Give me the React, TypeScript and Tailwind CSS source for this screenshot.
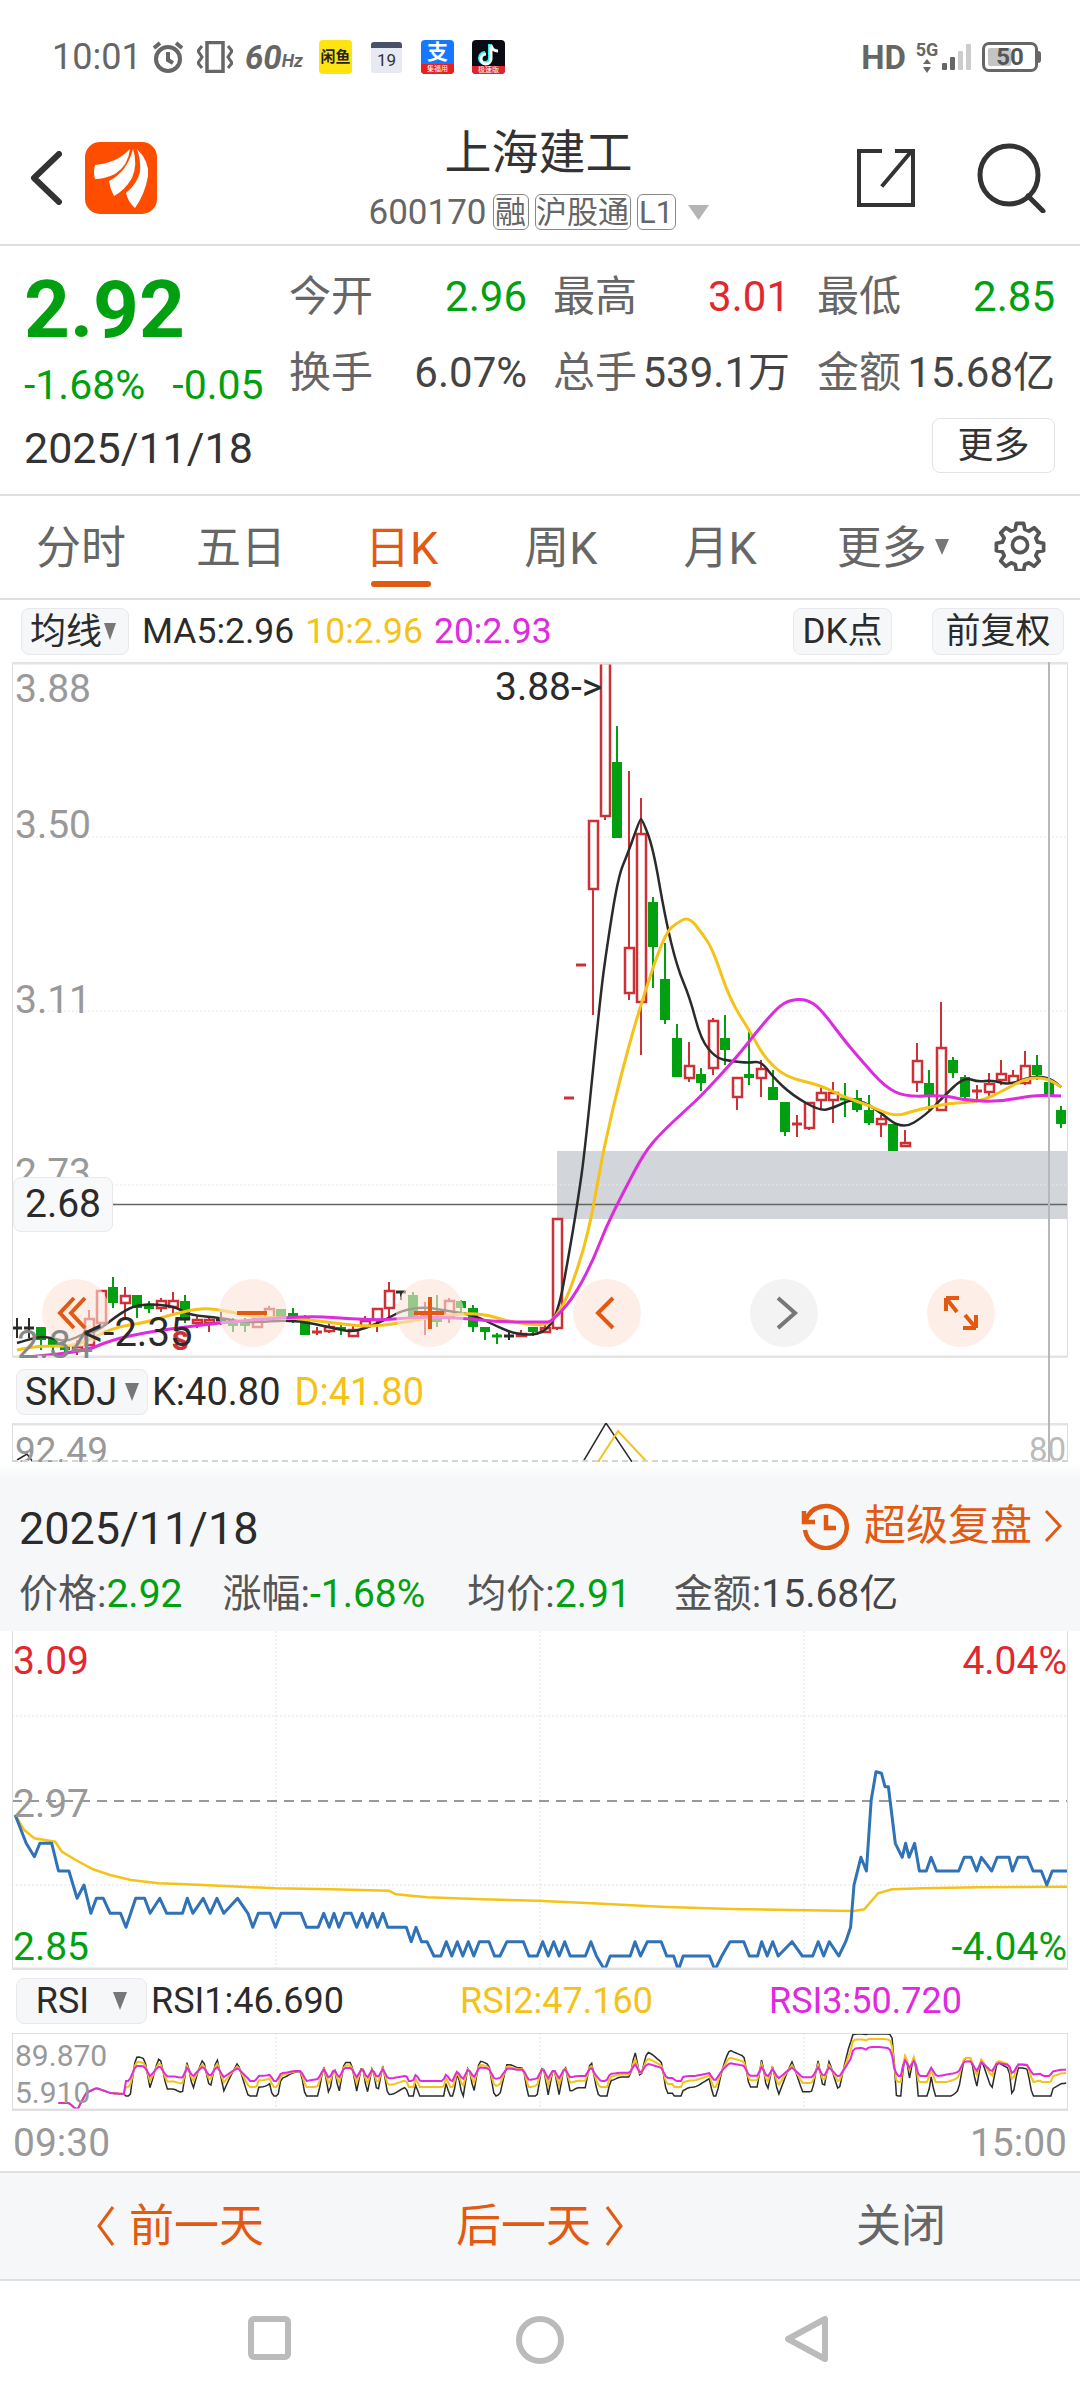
import React from "react";

const RED = "#cf3036";
const GREEN = "#00a010";
const YELLOW = "#f5c218";
const PINK = "#dd2bdd";
const INK = "#2b2b2b";
const ORANGE = "#e25a12";

// x, colour, wick top, body top, body bottom, wick bottom
type Candle = [number, string, number, number, number, number];
const candles: Candle[] = [
  [17, "k", 1318, 1327, 1328, 1338], [29, "k", 1318, 1327, 1328, 1338], [41, "g", 1327, 1327, 1340, 1350], [53, "g", 1336, 1338, 1347, 1354],
  [65, "g", 1340, 1345, 1350, 1354], [77, "r", 1340, 1346, 1350, 1355], [89, "r", 1310, 1318, 1345, 1346], [101, "r", 1290, 1290, 1323, 1325],
  [113, "g", 1277, 1287, 1303, 1308], [125, "r", 1287, 1295, 1303, 1317], [137, "g", 1295, 1295, 1308, 1318], [149, "g", 1301, 1305, 1309, 1313],
  [161, "r", 1298, 1300, 1308, 1312], [173, "r", 1292, 1300, 1307, 1315], [185, "g", 1295, 1301, 1320, 1323], [197, "r", 1316, 1319, 1323, 1328],
  [209, "r", 1316, 1319, 1323, 1332], [221, "k", 1309, 1319, 1320, 1325], [233, "g", 1318, 1320, 1326, 1332], [245, "g", 1318, 1320, 1326, 1332],
  [257, "r", 1316, 1318, 1327, 1327], [269, "r", 1306, 1308, 1318, 1320], [281, "g", 1309, 1309, 1317, 1318], [293, "g", 1308, 1313, 1317, 1323],
  [305, "g", 1315, 1318, 1335, 1335], [317, "r", 1327, 1331, 1332, 1335], [329, "r", 1322, 1326, 1331, 1333], [341, "g", 1323, 1327, 1330, 1335],
  [353, "r", 1325, 1329, 1336, 1336], [365, "r", 1316, 1320, 1326, 1328], [377, "r", 1308, 1308, 1320, 1332], [389, "r", 1282, 1290, 1308, 1320],
  [401, "k", 1291, 1291, 1292, 1300], [413, "g", 1292, 1295, 1317, 1318], [425, "r", 1302, 1314, 1316, 1335], [437, "g", 1295, 1318, 1322, 1327],
  [449, "r", 1298, 1300, 1317, 1323], [461, "g", 1300, 1301, 1308, 1312], [473, "g", 1305, 1308, 1327, 1332], [485, "g", 1327, 1327, 1332, 1340],
  [497, "g", 1333, 1335, 1336, 1344], [509, "k", 1331, 1335, 1336, 1340], [521, "r", 1330, 1333, 1336, 1337], [533, "g", 1327, 1327, 1332, 1336],
  [545, "r", 1322, 1327, 1332, 1333], [557, "r", 1218, 1218, 1328, 1330], [569, "r", 1097, 1097, 1098, 1098], [581, "r", 964, 964, 965, 965],
  [593, "r", 820, 820, 889, 1015], [605, "r", 662, 662, 816, 820], [617, "g", 726, 762, 838, 838], [629, "r", 771, 947, 993, 1000],
  [641, "r", 798, 833, 1002, 1055], [653, "g", 897, 902, 947, 988], [665, "g", 943, 979, 1020, 1024], [677, "g", 1024, 1038, 1077, 1077],
  [689, "r", 1042, 1065, 1078, 1082], [701, "g", 1068, 1074, 1083, 1091], [713, "r", 1018, 1020, 1068, 1075], [725, "g", 1015, 1038, 1050, 1065],
  [737, "r", 1077, 1077, 1097, 1110], [749, "g", 1030, 1074, 1078, 1085], [761, "r", 1060, 1068, 1078, 1097], [773, "g", 1070, 1087, 1100, 1100],
  [785, "g", 1102, 1102, 1132, 1136], [797, "r", 1115, 1123, 1124, 1137], [809, "r", 1102, 1102, 1128, 1130], [821, "r", 1085, 1092, 1100, 1110],
  [833, "r", 1082, 1092, 1100, 1123], [845, "g", 1083, 1098, 1100, 1117], [857, "g", 1090, 1098, 1110, 1112], [869, "g", 1095, 1110, 1123, 1125],
  [881, "r", 1115, 1118, 1124, 1137], [893, "g", 1124, 1124, 1151, 1151], [905, "r", 1130, 1142, 1146, 1146], [917, "r", 1043, 1060, 1082, 1092],
  [929, "g", 1070, 1083, 1097, 1110], [941, "r", 1002, 1047, 1110, 1110], [953, "g", 1057, 1060, 1073, 1078], [965, "g", 1075, 1077, 1097, 1098],
  [977, "r", 1085, 1090, 1092, 1100], [989, "r", 1073, 1083, 1092, 1097], [1001, "r", 1060, 1073, 1080, 1085], [1013, "r", 1070, 1075, 1083, 1085],
  [1025, "r", 1051, 1065, 1083, 1085], [1037, "g", 1055, 1065, 1075, 1080], [1049, "g", 1056, 1082, 1097, 1127], [1061, "g", 1106, 1110, 1124, 1128],
];

const ma5 = "17,1343 37,1337 48,1337 67,1342 85,1333 96,1332 122,1312 137,1305 159,1304 178,1308 189,1315 222,1318 240,1322 259,1322 296,1320 333,1328 351,1332 366,1328 385,1320 403,1310 425,1307 448,1311 474,1315 498,1327 518,1335 544,1334 558,1313 568,1260 578,1200 585,1150 600,1000 606,953 618,877 628,853 640,819 642,819 653,847 665,917 677,967 690,998 701,1040 716,1058 730,1061 749,1063 761,1061 773,1077 792,1095 820,1111 833,1108 854,1098 875,1108 902,1130 926,1115 943,1097 964,1077 978,1082 992,1080 1009,1085 1033,1076 1050,1078 1061,1087";
const ma10 = "17,1350 30,1347 48,1346 78,1346 111,1328 148,1322 170,1315 200,1308 222,1310 259,1318 296,1318 333,1323 370,1327 407,1322 444,1315 481,1313 510,1322 544,1326 555,1318 568,1297 589,1233 603,1150 623,1067 642,1000 665,933 678,922 689,917 702,933 713,950 730,1000 751,1033 764,1057 785,1077 820,1085 844,1097 868,1105 895,1117 916,1110 950,1103 978,1102 999,1093 1026,1078 1047,1078 1061,1087";
const ma20 = "17,1358 81,1353 111,1340 148,1332 185,1327 229,1322 266,1319 314,1316 351,1319 388,1320 414,1317 462,1318 499,1322 544,1322 551,1322 572,1300 592,1263 606,1227 623,1193 644,1153 661,1133 689,1107 702,1095 737,1057 758,1030 778,1007 790,1000 806,999 820,1008 844,1040 861,1060 885,1087 906,1097 943,1095 964,1100 999,1102 1033,1095 1061,1096";

// midpoint quadratic smoothing, the app draws its averages as curves
const smooth = (pts: string) => {
  const p = pts.split(" ").map((s) => s.split(",").map(Number));
  let d = `M${p[0][0]} ${p[0][1]}`;
  for (let i = 1; i < p.length - 1; i++) {
    const mx = (p[i][0] + p[i + 1][0]) / 2;
    const my = (p[i][1] + p[i + 1][1]) / 2;
    d += `Q${p[i][0]} ${p[i][1]} ${mx} ${my}`;
  }
  const last = p[p.length - 1];
  return `${d}L${last[0]} ${last[1]}`;
};

// intraday price, traced as x,y pairs off the 1568-wide crop
const pricePts = [22,945,38,1030,50,1070,58,1030,75,1030,85,1113,100,1113,112,1195,122,1155,132,1240,140,1195,150,1195,160,1240,175,1240,183,1282,197,1195,210,1195,218,1240,232,1195,242,1240,265,1240,272,1195,280,1240,295,1195,305,1240,315,1195,325,1240,345,1195,360,1240,367,1282,375,1240,392,1240,400,1282,408,1240,437,1240,445,1282,462,1282,470,1240,478,1282,485,1240,492,1282,500,1240,510,1240,518,1282,526,1240,533,1282,541,1240,548,1282,556,1240,563,1282,572,1282,590,1282,597,1325,604,1282,612,1325,620,1325,630,1368,640,1368,648,1325,656,1368,664,1325,672,1368,680,1325,688,1368,696,1325,710,1325,718,1368,726,1368,736,1325,760,1325,768,1368,780,1368,788,1325,796,1368,804,1325,812,1368,820,1325,828,1368,850,1368,858,1325,866,1368,878,1410,886,1368,915,1368,922,1325,930,1368,940,1325,960,1325,968,1368,978,1368,985,1410,992,1368,1030,1368,1038,1410,1048,1368,1060,1325,1080,1325,1088,1368,1100,1368,1106,1325,1114,1368,1122,1325,1130,1368,1150,1325,1165,1368,1180,1368,1188,1325,1196,1368,1204,1325,1218,1368,1228,1325,1235,1282,1240,1155,1250,1072,1258,1113,1265,900,1272,815,1280,820,1285,860,1290,860,1300,1030,1310,1072,1315,1030,1320,1072,1328,1030,1335,1113,1345,1113,1352,1072,1360,1113,1392,1113,1400,1072,1410,1072,1418,1113,1425,1072,1440,1113,1448,1072,1465,1072,1470,1113,1478,1072,1492,1072,1500,1113,1512,1113,1520,1155,1528,1113,1550,1113];
const avgPts = [22,945,35,990,50,1015,80,1025,90,1055,110,1080,135,1108,160,1125,190,1140,230,1150,270,1153,350,1160,400,1165,480,1168,565,1172,575,1183,620,1192,700,1198,780,1202,860,1210,960,1220,1060,1227,1170,1231,1240,1233,1255,1228,1275,1180,1295,1168,1340,1165,1420,1162,1550,1160];

const toIntraday = (pts: number[]) => {
  const out: string[] = [];
  for (let i = 0; i < pts.length; i += 2) out.push(`${(pts[i] / 1.452).toFixed(1)},${(1500 + pts[i + 1] / 3).toFixed(1)}`);
  return out.join(" ");
};

const lerp = (pts: number[], x: number) => {
  for (let j = 0; j < pts.length - 2; j += 2) {
    if (x <= pts[j + 2]) return pts[j + 1] + ((pts[j + 3] - pts[j + 1]) * (x - pts[j])) / (pts[j + 2] - pts[j]);
  }
  return pts[pts.length - 1];
};

// the opening stretch of the RSI pane, taken straight off the crop
const rsiStart = [85, 2103, 100, 2103, 112, 2110, 125, 2093, 140, 2088, 160, 2093, 180, 2094];

const rsiLine = (k: number, base: number, up: number, down: number, lift: number) => {
  const xs: number[] = [];
  for (let x = 85; x <= 1550; x += 3.16) xs.push(x);
  const price = (x: number) => lerp(pricePts, x) / 3;
  return xs
    .map((x) => {
      if (x < 180) return `${(x / 1.452).toFixed(1)},${lerp(rsiStart, x).toFixed(1)}`;
      let sum = 0;
      for (let i = 0; i < 24; i++) {
        const at = x - i * 3.16;
        // after the afternoon spike the average restarts, or it drags the lines down
        sum += price(x > 1310 ? Math.max(at, 1310) : at);
      }
      const move = (sum / 24 - price(x)) * k;
      const y = (x > 1300 ? base - lift : base) - (move > 0 ? up * Math.tanh(move / up) : Math.max(move, -down));
      return `${(x / 1.452).toFixed(1)},${y.toFixed(1)}`;
    })
    .join(" ");
};

function Caret({ className = "w-[14px] h-[20px]", color = "#777" }: { className?: string; color?: string }) {
  return (
    <svg viewBox="0 0 14 20" className={className} preserveAspectRatio="none">
      <polygon points="0,0 14,0 7,20" fill={color} />
    </svg>
  );
}

function ChartButton({ children, className }: { children: React.ReactNode; className: string }) {
  return (
    <div className={`flex items-center rounded-lg border border-[#e7e9ec] bg-[#f6f7f9] leading-none text-[#2b2b2b] ${className}`}>
      {children}
    </div>
  );
}

function Tag({ children, width }: { children: React.ReactNode; width: string }) {
  return (
    <span className={`flex h-[36px] items-center justify-center rounded-md border border-[#888] text-[31px] leading-none text-[#666] ${width}`}>
      {children}
    </span>
  );
}

function StatusBar() {
  return (
    <div className="flex h-[110px] items-start justify-between pl-[52px] pr-[39px] pt-[39px]">
      <div className="flex h-[36px] items-center">
        <span className="w-[99px] text-[36px] leading-none text-[#666]">10:01</span>
        <svg viewBox="0 0 34 34" className="h-[34px] w-[34px]" fill="none" stroke="#666" strokeWidth="4">
          <circle cx="17" cy="19" r="12" />
          <path d="M17 12v8l5 3M3 8l6-5M31 8l-6-5" />
        </svg>
        <svg viewBox="0 0 36 32" className="ml-[12px] h-[32px] w-[36px]" fill="none" stroke="#666" strokeWidth="3">
          <rect x="10" y="1.500" width="16" height="29" strokeWidth="3.500" />
          <path d="M5 5 1 10l4 6-4 6 4 5M31 5l4 5-4 6 4 6-4 5" />
        </svg>
        <span className="ml-[12px] text-[33px] font-bold italic leading-none text-[#666]">60</span>
        <span className="mt-[8px] text-[18px] font-bold italic leading-none text-[#666]">Hz</span>
        <div className="ml-[16px] flex h-[34px] w-[33px] items-center justify-center rounded-[4px] bg-[#ffe412] text-[15px] font-bold leading-none text-[#222]">闲鱼</div>
        <div className="ml-[19px] flex h-[31px] w-[31px] flex-col overflow-hidden rounded-[3px] bg-[#e8eaf3]">
          <div className="h-[6px] bg-[#4a5068]" />
          <div className="flex flex-1 items-center justify-center text-[17px] leading-none text-[#333]">19</div>
        </div>
        <div className="ml-[19px] flex h-[34px] w-[33px] flex-col overflow-hidden rounded-[4px] bg-[#1677ff]">
          <div className="flex h-[24px] items-center justify-center text-[21px] font-bold leading-none text-white">支</div>
          <div className="flex flex-1 items-center justify-center bg-[#e8201c] text-[7px] leading-none text-white">集福用</div>
        </div>
        <div className="ml-[18px] flex h-[34px] w-[33px] flex-col overflow-hidden rounded-[4px] bg-[#0b0b14]">
          <svg viewBox="0 0 33 26" className="h-[26px] w-[33px]" fill="none" strokeWidth="4">
            <path d="M18 4v14a5 5 0 1 1-5-5" stroke="#25f4ee" />
            <path d="M19 5v14a5 5 0 1 1-5-5M19 5c1 4 3 6 7 6" stroke="#fff" strokeWidth="3" />
          </svg>
          <div className="flex flex-1 items-center justify-center bg-[#e0232f] text-[7px] leading-none text-white">极速版</div>
        </div>
      </div>
      <div className="flex h-[36px] items-center">
        <span className="text-[33px] font-bold leading-none text-[#666]">HD</span>
        <div className="ml-[9px] flex w-[24px] flex-col items-center">
          <span className="text-[18px] font-bold leading-none text-[#666]">5G</span>
          <svg viewBox="0 0 10 14" className="h-[14px] w-[10px]" fill="#666">
            <polygon points="5,0 9,5 1,5" />
            <polygon points="5,14 9,8 1,8" />
          </svg>
        </div>
        <div className="ml-[3px] flex h-[26px] items-end gap-[3px]">
          <div className="h-[7px] w-[5px] rounded-[1px] bg-[#666]" />
          <div className="h-[13px] w-[5px] rounded-[1px] bg-[#666]" />
          <div className="h-[19px] w-[5px] rounded-[1px] bg-[#ccc]" />
          <div className="h-[26px] w-[5px] rounded-[1px] bg-[#ccc]" />
        </div>
        <div className="relative ml-[11px] flex h-[30px] w-[56px] items-center rounded-[7px] border-[3px] border-[#666] p-[3px]">
          <div className="h-full w-[23px] rounded-[2px] bg-[#c4c4c4]" />
          <span className="absolute inset-0 flex items-center justify-center text-[24px] font-bold leading-none text-[#555]">50</span>
        </div>
        <div className="h-[12px] w-[3px] rounded-r-sm bg-[#666]" />
      </div>
    </div>
  );
}

function Header() {
  return (
    <div className="flex h-[136px] items-start justify-between border-b-2 border-[#dfdfdf] pl-[30px] pr-[33px]">
      <div className="flex w-[300px] items-center pt-[32px]">
        <svg viewBox="0 0 32 54" className="h-[54px] w-[32px]" fill="none" stroke="#333" strokeWidth="6" strokeLinecap="round" strokeLinejoin="round">
          <path d="M29 3 4 27l25 24" />
        </svg>
        <div className="ml-[23px] h-[72px] w-[72px] rounded-[15px] bg-[#ff4d00]">
          <svg viewBox="0 0 72 72" className="h-[72px] w-[72px]" fill="#fff">
            <path d="M10 23Q32 21 45 7 43 24 30 32 20 37 10 37 8 30 10 23Z" />
            <path d="M24 39Q42 30 48 7 53 22 47 36 40 48 29 54 25 47 24 39Z" />
            <path d="M52 7Q65 20 63 34 60 52 50 66 43 60 41 51 52 42 55 30 56 18 52 7Z" />
          </svg>
        </div>
      </div>
      <div className="flex flex-col items-center pt-[16px]">
        <div className="text-[47px] leading-[54px] text-[#333]">上海建工</div>
        <div className="mt-[14px] flex h-[36px] items-center gap-[6px]">
          <span className="text-[35px] leading-none text-[#666]">600170</span>
          <Tag width="w-[36px]">融</Tag>
          <Tag width="w-[96px]">沪股通</Tag>
          <Tag width="w-[39px]">L1</Tag>
          <Caret className="ml-[6px] h-[15px] w-[21px]" color="#b5b5b5" />
        </div>
      </div>
      <div className="flex w-[300px] items-center justify-end pt-[33px]">
        <svg viewBox="0 0 58 58" className="h-[58px] w-[58px]" fill="none" stroke="#333" strokeWidth="4">
          <path d="M23 2H2v54h54V2M56 3v24M26 36 53 4M56 2H40" strokeLinecap="square" />
        </svg>
        <svg viewBox="0 0 70 70" className="ml-[62px] h-[70px] w-[70px]" fill="none" stroke="#333" strokeWidth="5">
          <circle cx="32" cy="32" r="29" />
          <path d="m51 53 15 15" strokeLinecap="round" />
        </svg>
      </div>
    </div>
  );
}

function Stat({ label, value, color, width }: { label: string; value: string; color: string; width: string }) {
  return (
    <div className={`flex items-center justify-between ${width}`}>
      <span className="text-[42px] leading-none text-[#666]">{label}</span>
      <span className={`text-[42px] leading-none ${color}`}>{value}</span>
    </div>
  );
}

function Quote() {
  return (
    <div className="flex h-[250px] border-b-2 border-[#dfdfdf] pl-[24px]">
      <div className="w-[265px] pt-[20px]">
        <div className="text-[80px] font-bold leading-[88px] text-[#00a010]">2.92</div>
        <div className="mt-[11px] flex gap-[27px] text-[41px] leading-none text-[#00a010]">
          <span>-1.68%</span>
          <span>-0.05</span>
        </div>
        <div className="mt-[21px] text-[43px] leading-none text-[#333]">2025/11/18</div>
      </div>
      <div className="pt-[30px]">
        <div className="flex">
          <Stat label="今开" value="2.96" color="text-[#00a010]" width="w-[238px]" />
          <Stat label="最高" value="3.01" color="text-[#e0282e]" width="ml-[26px] w-[237px]" />
          <Stat label="最低" value="2.85" color="text-[#00a010]" width="ml-[27px] w-[238px]" />
        </div>
        <div className="mt-[34px] flex">
          <Stat label="换手" value="6.07%" color="text-[#444]" width="w-[238px]" />
          <Stat label="总手" value="539.1万" color="text-[#444]" width="ml-[26px] w-[237px]" />
          <Stat label="金额" value="15.68亿" color="text-[#444]" width="ml-[27px] w-[238px]" />
        </div>
        <div className="mt-[24px] flex justify-end">
          <div className="flex h-[55px] w-[123px] items-center justify-center rounded-lg border border-[#e3e3e3] text-[36px] leading-none text-[#333]">更多</div>
        </div>
      </div>
    </div>
  );
}

function Tabs() {
  const base = "text-[45px] leading-none text-[#666]";
  return (
    <div className="relative flex h-[104px] items-start border-b-2 border-[#dfdfdf] pt-[30px]">
      <span className={`ml-[36px] ${base}`}>分时</span>
      <span className={`ml-[70px] ${base}`}>五日</span>
      <span className="ml-[79px] text-[45px] leading-none text-[#e25a12]">日K</span>
      <span className={`ml-[86px] ${base}`}>周K</span>
      <span className={`ml-[86px] ${base}`}>月K</span>
      <span className={`ml-[80px] ${base}`}>更多</span>
      <Caret className="ml-[8px] mt-[13px] h-[16px] w-[14px]" />
      <svg viewBox="0 0 24 24" className="ml-[45px] -mt-[7px] h-[52px] w-[52px]" fill="none" stroke="#555" strokeWidth="1.700" strokeLinejoin="round">
        <path d="M10.300 2h3.400l.5 2.800 1.900.8 2.400-1.600 2.400 2.400-1.600 2.400.8 1.900 2.800.5v3.400l-2.800.5-.8 1.900 1.600 2.400-2.400 2.400-2.400-1.600-1.900.8-.5 2.800h-3.400l-.5-2.800-1.900-.8-2.400 1.600-2.400-2.400 1.600-2.400-.8-1.900-2.800-.5v-3.400l2.800-.5.8-1.900-1.600-2.400 2.400-2.400 2.400 1.600 1.900-.8z" />
        <circle cx="12" cy="12" r="3.500" />
      </svg>
      <div className="absolute left-[371px] top-[85px] h-[6px] w-[60px] rounded-full bg-[#e25a12]" />
    </div>
  );
}

function CircleButton({ cx, gray, children }: { cx: number; gray?: boolean; children?: React.ReactNode }) {
  return (
    <div
      className={`absolute top-[617px] h-[68px] w-[68px] rounded-full ${gray ? "bg-[#eeeeee]/70" : "bg-[#fbe4d8]/60"}`}
      style={{ left: cx - 46 }}
    >
      <svg viewBox="0 0 68 68" className="h-[68px] w-[68px]" fill="none" stroke={gray ? "#777" : ORANGE} strokeWidth="4">
        {children}
      </svg>
    </div>
  );
}

function KChart() {
  return (
    <div className="relative mx-[12px] h-[696px] w-[1056px]">
      <svg viewBox="12 662 1056 696" className="absolute inset-0 h-[696px] w-[1056px]" fill="none">
        <rect x="557" y="1151" width="511" height="68" fill="#d2d5da" />
        {[837, 1011, 1185].map((y) => (
          <line key={y} x1="12" x2="1068" y1={y} y2={y} stroke="#e8e8e8" strokeDasharray="2 2" />
        ))}
        <line x1="13" x2="1068" y1="1204.500" y2="1204.500" stroke="#666" strokeWidth="1.500" />
        {candles.map(([x, c, wt, bt, bb, wb]) => {
          const col = c === "r" ? RED : c === "g" ? GREEN : INK;
          return (
            <g key={x}>
              <line x1={x} x2={x} y1={wt} y2={bt} stroke={col} strokeWidth="2" />
              <line x1={x} x2={x} y1={bb} y2={wb} stroke={col} strokeWidth="2" />
              {bb - bt <= 2 ? (
                <line x1={x - 5} x2={x + 5} y1={bt + 1} y2={bt + 1} stroke={col} strokeWidth="3" />
              ) : c === "r" ? (
                <rect x={x - 4} y={bt + 1} width="9" height={bb - bt - 1} fill="#fff" stroke={col} strokeWidth="2.500" />
              ) : (
                <rect x={x - 5} y={bt} width="10" height={bb - bt} fill={col} />
              )}
            </g>
          );
        })}
        <path d={smooth(ma5)} stroke={INK} strokeWidth="2.500" />
        <path d={smooth(ma10)} stroke={YELLOW} strokeWidth="3" />
        <path d={smooth(ma20)} stroke={PINK} strokeWidth="3" />
        <path d="M12 662V1358M1068 662V1358" stroke="#dedede" strokeWidth="2" />
        <path d="M12 663H1068M12 1357H1068" stroke="#e4e4e4" strokeWidth="3" />
      </svg>
      <span className="absolute left-[3px] top-[8px] text-[39px] leading-none text-[#999]">3.88</span>
      <span className="absolute left-[3px] top-[144px] text-[39px] leading-none text-[#999]">3.50</span>
      <span className="absolute left-[3px] top-[319px] text-[39px] leading-none text-[#999]">3.11</span>
      <span className="absolute left-[3px] top-[492px] text-[39px] leading-none text-[#999]">2.73</span>
      <span className="absolute left-[483px] top-[6px] text-[39px] leading-none text-[#2b2b2b]">3.88-&gt;</span>
      <div className="absolute left-[1px] top-[515px] flex h-[55px] w-[100px] items-center justify-center rounded-lg border border-[#e7e9ec] bg-[#f8f9fa] text-[39px] leading-none text-[#2b2b2b]">2.68</div>
      <CircleButton cx={76}>
        <path d="M32 19 18 34l14 15M43 19 29 34l14 15" />
      </CircleButton>
      <CircleButton cx={253}>
        <path d="M18 34h30" />
      </CircleButton>
      <CircleButton cx={430}>
        <path d="M18 34h30M34 18v32" />
      </CircleButton>
      <CircleButton cx={607}>
        <path d="M40 19 25 34l15 15" />
      </CircleButton>
      <CircleButton cx={784} gray>
        <path d="m28 19 17 15-17 15" />
      </CircleButton>
      <CircleButton cx={961}>
        <path d="M19 19h13M19 19v13M19 19l11 14M49 49H36M49 49V36M49 49 38 36" />
      </CircleButton>
      <span className="absolute left-[160px] top-[666px] text-[26px] font-black leading-none text-[#cf3036]">S</span>
      <span className="absolute left-[5px] top-[664px] text-[39px] leading-none text-[#888]">2.34</span>
      <span className="absolute left-[71px] top-[651px] text-[40px] leading-none text-[#2b2b2b]">&lt;-2.35</span>
    </div>
  );
}

function SkdjChart() {
  return (
    <div className="relative mx-[12px] h-[39px] w-[1056px] overflow-hidden">
      <svg viewBox="12 1423 1056 39" className="absolute inset-0 h-[39px] w-[1056px]" fill="none">
        <path d="M12 1424H1068" stroke="#e4e4e4" strokeWidth="3" />
        <path d="M12 1423V1462M1068 1423V1462" stroke="#dedede" strokeWidth="2" />
        <path d="M17 1460l10-6 6 8" stroke={INK} strokeWidth="1.500" />
        <path d="M583 1462 606 1423 632 1462" stroke={INK} strokeWidth="1.500" />
        <path d="M598 1462 618 1431 647 1462" stroke={YELLOW} strokeWidth="2" />
      </svg>
      <span className="absolute left-[3px] top-[9px] text-[37px] leading-none text-[#999]">92.49</span>
      <span className="absolute right-[2px] top-[10px] text-[33px] leading-none text-[#bbb]">80</span>
      <div className="absolute inset-x-0 bottom-0 border-b-2 border-dashed border-[#d4d4d4]" />
    </div>
  );
}

function Intraday() {
  return (
    <div className="relative mx-[12px] h-[339px] w-[1056px]">
      <svg viewBox="12 1631 1056 339" className="absolute inset-0 h-[339px] w-[1056px]" fill="none">
        {[1716, 1885].map((y) => (
          <line key={y} x1="12" x2="1068" y1={y} y2={y} stroke="#e2e2e2" strokeDasharray="2 2" />
        ))}
        {[276, 540, 804].map((x) => (
          <line key={x} x1={x} x2={x} y1="1631" y2="1970" stroke="#e2e2e2" strokeDasharray="2 2" />
        ))}
        <line x1="12" x2="1068" y1="1801" y2="1801" stroke="#999" strokeWidth="2" strokeDasharray="10 7" />
        <polyline points={toIntraday(avgPts)} stroke={YELLOW} strokeWidth="2.500" />
        <polyline points={toIntraday(pricePts)} stroke="#2f72b8" strokeWidth="3" strokeLinejoin="round" />
        <path d="M12 1631V1970M1068 1631V1970" stroke="#dedede" strokeWidth="2" />
        <path d="M12 1969H1068" stroke="#e0e0e0" strokeWidth="3" />
      </svg>
      <span className="absolute left-[1px] top-[11px] text-[39px] leading-none text-[#e0282e]">3.09</span>
      <span className="absolute right-[1px] top-[11px] text-[39px] leading-none text-[#e0282e]">4.04%</span>
      <span className="absolute left-[1px] top-[154px] text-[39px] leading-none text-[#999]">2.97</span>
      <span className="absolute left-[1px] top-[297px] text-[39px] leading-none text-[#00a010]">2.85</span>
      <span className="absolute right-[1px] top-[297px] text-[39px] leading-none text-[#00a010]">-4.04%</span>
    </div>
  );
}

function RsiChart() {
  return (
    <div className="relative mx-[12px] h-[78px] w-[1056px]">
      <svg viewBox="12 2033 1056 78" className="absolute inset-0 h-[78px] w-[1056px]" fill="none">
        {[276, 540, 804].map((x) => (
          <line key={x} x1={x} x2={x} y1="2033" y2="2110" stroke="#e2e2e2" strokeDasharray="2 2" />
        ))}
        <polyline points={rsiLine(2.2, 2078, 44, 18, 0)} stroke={INK} strokeWidth="1.500" />
        <polyline points={rsiLine(1.3, 2075, 36, 12, 5)} stroke={YELLOW} strokeWidth="2" />
        <polyline points={rsiLine(0.7, 2073, 26, 8, 5)} stroke={PINK} strokeWidth="2" />
        <path d="M12 2033H1068M12 2033V2110M1068 2033V2110" stroke="#dedede" strokeWidth="2" />
        <path d="M12 2110H1068" stroke="#e0e0e0" strokeWidth="3" />
      </svg>
      <span className="absolute left-[3px] top-[8px] text-[30px] leading-none text-[#999]">89.870</span>
      <span className="absolute left-[3px] top-[45px] text-[30px] leading-none text-[#999]">5.910</span>
    </div>
  );
}

export default function App() {
  return (
    <div className="flex h-[2400px] w-[1080px] flex-col overflow-hidden bg-white font-['Roboto','Noto_Sans_CJK_SC',sans-serif]">
      <StatusBar />
      <Header />
      <Quote />
      <Tabs />

      <div className="flex h-[62px] items-start justify-between pl-[21px] pr-[16px] pt-[8px]">
        <div className="flex items-start">
          <ChartButton className="h-[47px] w-[108px] gap-[2px] pl-[8px] text-[36px]">
            均线
            <Caret className="h-[17px] w-[12px]" />
          </ChartButton>
          <div className="ml-[13px] flex h-[47px] items-center gap-[11px] text-[35.500px] leading-none">
            <span className="text-[#2b2b2b]">MA5:2.96</span>
            <span className="text-[#f5c218]">10:2.96</span>
            <span className="text-[#dd2bdd]">20:2.93</span>
          </div>
        </div>
        <div className="flex gap-[40px]">
          <ChartButton className="h-[47px] w-[99px] justify-center text-[35px]">DK点</ChartButton>
          <ChartButton className="h-[47px] w-[132px] justify-center text-[35px]">前复权</ChartButton>
        </div>
      </div>

      <div className="relative">
        <KChart />
        <div className="flex h-[65px] items-start pl-[16px] pt-[11px]">
          <ChartButton className="h-[46px] w-[132px] justify-center gap-[8px] text-[38px]">
            SKDJ
            <Caret className="h-[18px] w-[14px]" />
          </ChartButton>
          <div className="ml-[4px] flex h-[46px] items-center gap-[14px] text-[38px] leading-none">
            <span className="text-[#2b2b2b]">K:40.80</span>
            <span className="text-[#f5c218]">D:41.80</span>
          </div>
        </div>
        <SkdjChart />
        <div className="absolute bottom-0 left-[1048px] top-0 w-[2px] bg-[#b8b8b8]" />
      </div>

      <div className="h-[18px] bg-gradient-to-b from-white to-[#f6f7f9]" />

      <div className="h-[151px] bg-[#f6f7f9] pl-[19px] pr-[18px]">
        <div className="flex items-center justify-between pt-[26px]">
          <span className="text-[45px] leading-none text-[#2b2b2b]">2025/11/18</span>
          <div className="-mt-[5px] flex items-center text-[#e25a12]">
            <svg viewBox="0 0 48 48" className="h-[48px] w-[48px]" fill="none" stroke={ORANGE} strokeWidth="4.500">
              <path d="M5 18A21 21 0 1 1 4 28" />
              <path d="M3 9v11h11" />
              <path d="M25 13v13h10" />
            </svg>
            <span className="ml-[15px] text-[42px] leading-none">超级复盘</span>
            <svg viewBox="0 0 18 34" className="ml-[12px] h-[34px] w-[18px]" fill="none" stroke={ORANGE} strokeWidth="3">
              <path d="m2 2 14 15L2 32" />
            </svg>
          </div>
        </div>
        <div className="mt-[24px] flex items-center text-[39px] leading-none text-[#555]">
          <span>价格:<span className="text-[#00a010]">2.92</span></span>
          <span className="ml-[40px]">涨幅:<span className="text-[#00a010]">-1.68%</span></span>
          <span className="ml-[42px]">均价:<span className="text-[#00a010]">2.91</span></span>
          <span className="ml-[43px]">金额:<span className="text-[#444]">15.68亿</span></span>
        </div>
      </div>

      <Intraday />

      <div className="flex h-[63px] items-start pl-[16px] pt-[8px]">
        <ChartButton className="h-[46px] w-[131px] justify-center gap-[24px] text-[36px]">
          RSI
          <Caret className="h-[18px] w-[14px]" />
        </ChartButton>
        <div className="ml-[4px] flex h-[46px] items-center text-[36px] leading-none">
          <span className="w-[309px] text-[#2b2b2b]">RSI1:46.690</span>
          <span className="w-[309px] text-[#f5c218]">RSI2:47.160</span>
          <span className="text-[#dd2bdd]">RSI3:50.720</span>
        </div>
      </div>

      <RsiChart />

      <div className="flex h-[60px] items-start justify-between pl-[13px] pr-[13px] pt-[13px] text-[39px] leading-none text-[#999]">
        <span>09:30</span>
        <span>15:00</span>
      </div>

      <div className="flex h-[110px] items-center border-y-2 border-[#dfdfdf] bg-[#f6f7f9] text-[45px] leading-none">
        <div className="ml-[97px] flex items-center text-[#e25a12]">
          <svg viewBox="0 0 18 42" className="h-[42px] w-[18px]" fill="none" stroke={ORANGE} strokeWidth="3">
            <path d="M16 2 2 21l14 19" />
          </svg>
          <span className="ml-[14px]">前一天</span>
        </div>
        <div className="ml-[192px] flex items-center text-[#e25a12]">
          <span>后一天</span>
          <svg viewBox="0 0 18 42" className="ml-[14px] h-[42px] w-[18px]" fill="none" stroke={ORANGE} strokeWidth="3">
            <path d="m2 2 14 19L2 40" />
          </svg>
        </div>
        <span className="ml-[233px] text-[#666]">关闭</span>
      </div>

      <div className="flex flex-1 items-start pl-[248px] pt-[35px]">
        <div className="h-[44px] w-[43px] rounded-md border-[6px] border-[#bbb]" />
        <div className="ml-[225px] h-[48px] w-[48px] rounded-full border-[6px] border-[#bbb]" />
        <svg viewBox="0 0 44 46" className="ml-[221px] h-[46px] w-[44px]" fill="none" stroke="#bbb" strokeWidth="6" strokeLinejoin="round">
          <path d="M40 3v40L3 23z" />
        </svg>
      </div>
    </div>
  );
}
